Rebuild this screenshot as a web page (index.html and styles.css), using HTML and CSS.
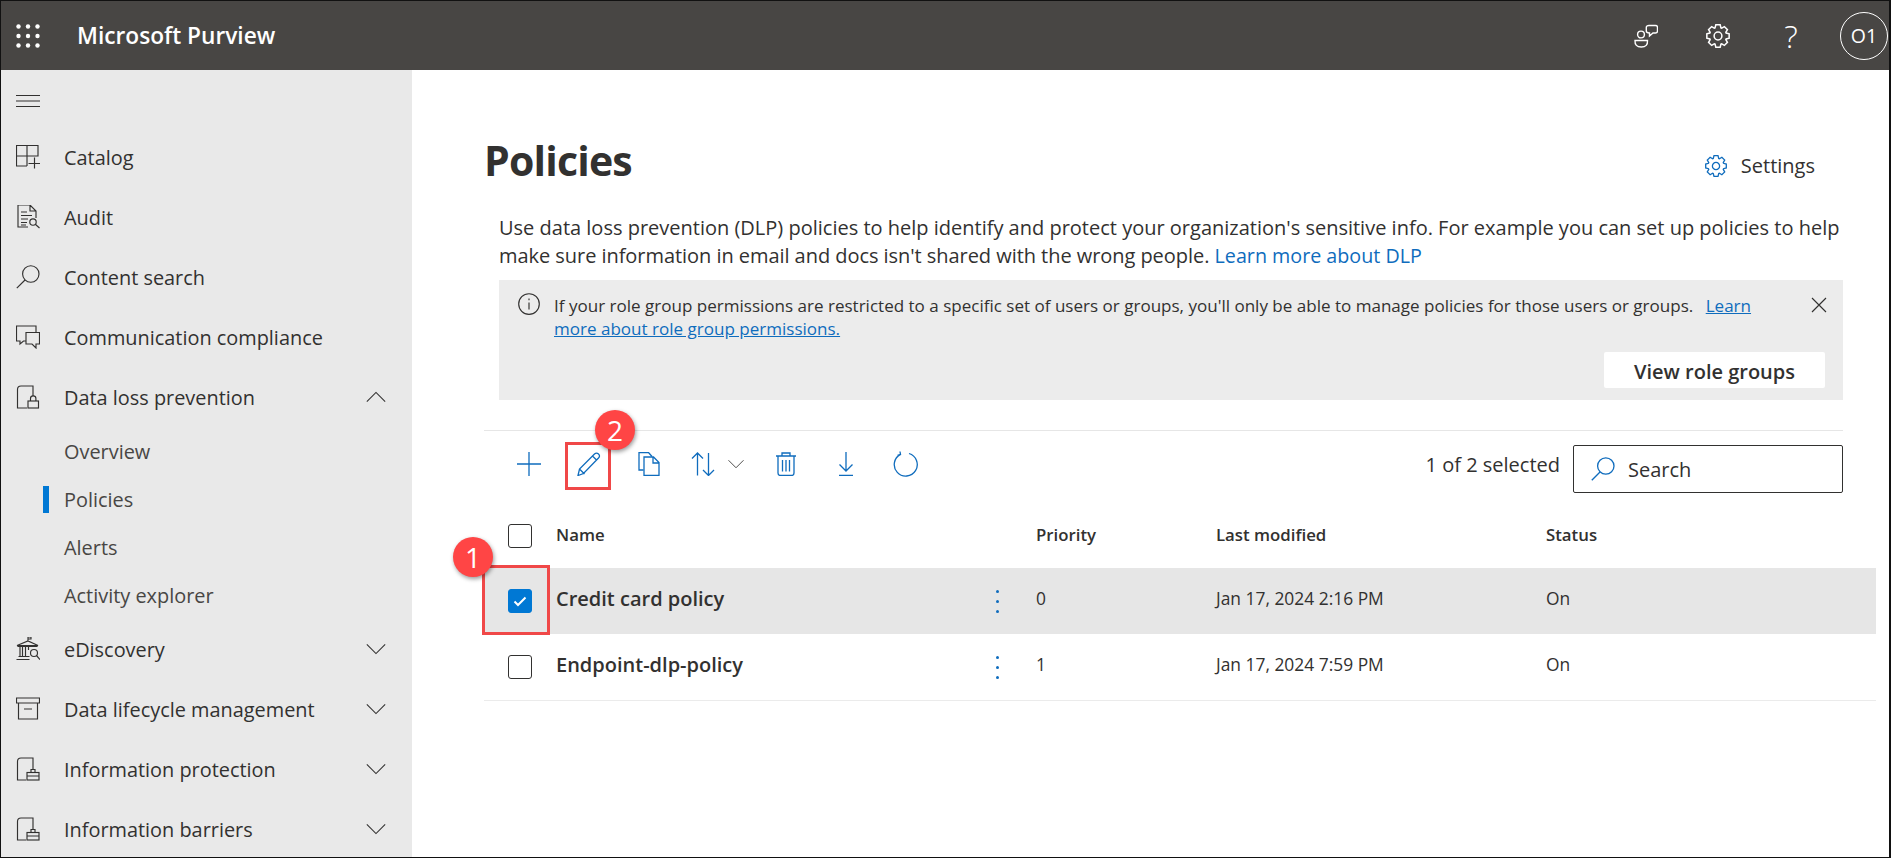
FILE: index.html
```html
<!DOCTYPE html>
<html lang="en">
<head>
<meta charset="utf-8">
<title>Microsoft Purview - Policies</title>
<link rel="stylesheet" href="styles.css">
</head>
<body>
<svg class="defs" width="0" height="0" aria-hidden="true">
  <defs>
    <symbol id="gear" viewBox="0 0 24 24">
      <g transform="translate(12 12)">
        <polygon points="-2.74,-7.52 -2,-10.3 2,-10.3 2.74,-7.52 3.38,-7.25 5.87,-8.7 8.7,-5.87 7.25,-3.38 7.52,-2.74 10.3,-2 10.3,2 7.52,2.74 7.25,3.38 8.7,5.87 5.87,8.7 3.38,7.25 2.74,7.52 2,10.3 -2,10.3 -2.74,7.52 -3.38,7.25 -5.87,8.7 -8.7,5.87 -7.25,3.38 -7.52,2.74 -10.3,2 -10.3,-2 -7.52,-2.74 -7.25,-3.38 -8.7,-5.87 -5.87,-8.7 -3.38,-7.25"/>
        <circle r="3.6"/>
      </g>
    </symbol>
    <symbol id="down" viewBox="0 0 24 24"><path d="M2 7l10 10L22 7"/></symbol>
    <symbol id="magnifier" viewBox="0 0 24 24"><circle cx="14.8" cy="9" r="8.2"/><path d="M9 15L.8 23.2"/></symbol>
    <symbol id="doclock" viewBox="0 0 24 24"><path d="M11 23H1.5V4.500Q1.500 1 5 1h12v10"/><rect x="12" y="16" width="10.500" height="7"/><path d="M14.500 16v-2.500a2.700 2.700 0 0 1 5.400 0V16"/></symbol>
    <symbol id="docbag" viewBox="0 0 24 24"><path d="M10 23H1.500V4.500Q1.500 1 5 1h12v11"/><rect x="11" y="15.500" width="12" height="7.500"/><path d="M15 15.500v-3h4v3M11 19h12"/></symbol>
  </defs>
</svg>

<div class="app">
  <header class="topbar">
    <svg class="waffle" width="24" height="24" viewBox="0 0 24 24"><g class="dots-white"><circle cx="2.500" cy="2.500" r="2.200"/><circle cx="12" cy="2.500" r="2.200"/><circle cx="21.500" cy="2.500" r="2.200"/><circle cx="2.500" cy="12" r="2.200"/><circle cx="12" cy="12" r="2.200"/><circle cx="21.500" cy="12" r="2.200"/><circle cx="2.500" cy="21.500" r="2.200"/><circle cx="12" cy="21.500" r="2.200"/><circle cx="21.500" cy="21.500" r="2.200"/></g></svg>
    <div class="brand">Microsoft Purview</div>
    <div class="top-actions">
      <svg class="top-icon line-white" width="24" height="24" viewBox="0 0 24 24"><circle cx="7" cy="10.500" r="3.400"/><path d="M1 16.500h12.500q.5 6.500-6.200 6.500T1 16.500z"/><path d="M15 1.500h6.500q2 0 2 2v3.500q0 2-2 2h-2.500l-3.500 3V9q-3.200 0-3.200-2V3.500q0-2 2.700-2z"/></svg>
      <svg class="top-icon line-white" width="26" height="26"><use href="#gear"/></svg>
      <div class="help">?</div>
      <div class="avatar">O1</div>
    </div>
  </header>

  <div class="body-row">
    <nav class="sidebar">
      <div class="nav-toggle">
        <svg class="line-dark" width="24" height="24" viewBox="0 0 24 24"><path d="M0 6.500h24M0 12h24M0 17.500h24"/></svg>
      </div>
      <div class="nav-item">
        <svg class="line-dark" width="24" height="24" viewBox="0 0 24 24"><path d="M.5.500H22V11H.5zM11 .5V21M.5 11V21H11M12.500 18.500H24M18.500 12.500V23.500"/></svg>
        <span>Catalog</span>
      </div>
      <div class="nav-item">
        <svg class="line-dark" width="24" height="24" viewBox="0 0 24 24"><path d="M12 22H2V0h12l6 6v7M14 0v6h6M5 7h6M5 10.500h11M5 14h7M5 17.500h6M5 20h5"/><circle cx="17" cy="17" r="3.200"/><path d="M19.300 19.300L23.500 23"/></svg>
        <span>Audit</span>
      </div>
      <div class="nav-item">
        <svg class="line-dark" width="24" height="24"><use href="#magnifier"/></svg>
        <span>Content search</span>
      </div>
      <div class="nav-item">
        <svg class="line-dark" width="24" height="24" viewBox="0 0 24 24"><path d="M20 7V1H.5v15H4v3l3.500-3H10"/><path d="M10 7.500h13.500V19H20v4l-4-4h-6z"/></svg>
        <span>Communication compliance</span>
      </div>
      <div class="nav-item">
        <svg class="line-dark" width="24" height="24"><use href="#doclock"/></svg>
        <span>Data loss prevention</span>
        <svg class="chev line-dark" width="22" height="22" viewBox="0 0 24 24"><path d="M2 17L12 7l10 10"/></svg>
      </div>
      <div class="nav-sub">Overview</div>
      <div class="nav-sub current">Policies</div>
      <div class="nav-sub">Alerts</div>
      <div class="nav-sub">Activity explorer</div>
      <div class="nav-item">
        <svg class="line-dark" width="24" height="24" viewBox="0 0 24 24"><path d="M12 4V0h3v2h-3M1 8.500L12 4l10 4.500zM2 8.500v1h19v-1M4 10v9M6.500 10v9M9.500 10v9M12.500 10v3M2.500 19.500h11M.5 22.500h13"/><circle cx="18" cy="16" r="3.500"/><path d="M20.500 18.500L24 22.500"/></svg>
        <span>eDiscovery</span>
        <svg class="chev line-dark" width="22" height="22"><use href="#down"/></svg>
      </div>
      <div class="nav-item">
        <svg class="line-dark" width="24" height="24" viewBox="0 0 24 24"><path d="M.5 1h23v5H.5zM2.500 6v16h19V6M8 12h8"/></svg>
        <span>Data lifecycle management</span>
        <svg class="chev line-dark" width="22" height="22"><use href="#down"/></svg>
      </div>
      <div class="nav-item">
        <svg class="line-dark" width="24" height="24"><use href="#docbag"/></svg>
        <span>Information protection</span>
        <svg class="chev line-dark" width="22" height="22"><use href="#down"/></svg>
      </div>
      <div class="nav-item">
        <svg class="line-dark" width="24" height="24"><use href="#docbag"/></svg>
        <span>Information barriers</span>
        <svg class="chev line-dark" width="22" height="22"><use href="#down"/></svg>
      </div>
    </nav>

    <main class="content">
      <div class="title-row">
        <h1>Policies</h1>
        <div class="settings">
          <svg class="line-blue" width="24" height="24"><use href="#gear"/></svg>
          <span>Settings</span>
        </div>
      </div>
      <p class="desc">Use data loss prevention (DLP) policies to help identify and protect your organization's sensitive info. For example you can set up policies to help<br><span class="desc-line">make sure information in email and docs isn't shared with the wrong people.</span> <a href="#">Learn more about DLP</a></p>

      <section class="banner">
        <svg class="line-dark info" width="22" height="22" viewBox="0 0 22 22"><circle cx="11" cy="11" r="10.300"/><path d="M11 9.500v7M11 5.500v1.800"/></svg>
        <p>If your role group permissions are restricted to a specific set of users or groups, you'll only be able to manage policies for those users or groups. <a class="learn" href="#">Learn</a><br><a href="#">more about role group permissions.</a></p>
        <svg class="line-dark close" width="16" height="16" viewBox="0 0 16 16"><path d="M1 1l14 14M15 1L1 15"/></svg>
        <button class="view-btn" type="button">View role groups</button>
      </section>

      <div class="toolbar">
        <div class="tool"><svg class="line-blue" width="24" height="24" viewBox="0 0 24 24"><path d="M12 0v24M0 12h24"/></svg></div>
        <div class="tool"><svg class="line-blue" width="24" height="24" viewBox="0 0 24 24"><path d="M1 23.500l1.500-6.500L17.500 2q2-1.800 4 0t0 4L6.500 21.500zM2.500 17l5 5M15.500 4l4.500 4.500"/></svg></div>
        <div class="tool"><svg class="line-blue" width="24" height="24" viewBox="0 0 24 24"><path d="M6.500 18H2V.5h9.500l3.500 4"/><path d="M7 5h9.500l5.500 5.500V23.500H7zM16 5v6h6"/></svg></div>
        <div class="tool tool-sort">
          <svg class="line-blue" width="24" height="24" viewBox="0 0 24 24"><path d="M6.500 23.500V1M1 6.500L6.500 1 12 6.500M17.500 1v22.500M12 18l5.500 5.500L23 18"/></svg>
          <svg class="line-dark" width="18" height="18"><use href="#down"/></svg>
        </div>
        <div class="tool"><svg class="line-blue" width="24" height="24" viewBox="0 0 24 24"><path d="M2 4h20M8 4V1h8v3M4 4v17q0 2.500 2.500 2.500h11q2.500 0 2.500-2.500V4M8.500 8v11.500M12 8v11.500M15.500 8v11.500"/></svg></div>
        <div class="tool"><svg class="line-blue" width="24" height="24" viewBox="0 0 24 24"><path d="M12 0v19M5.500 12.500L12 19l6.500-6.500M5 23.500h14"/></svg></div>
        <div class="tool"><svg class="line-blue" width="26" height="26" viewBox="0 0 26 26"><path d="M16 2.500a11.500 11.500 0 1 1-8.500.8M7 .5l.5 3-3 .8"/></svg></div>
        <span class="selected-count">1 of 2 selected</span>
        <div class="search">
          <svg class="line-blue" width="24" height="24"><use href="#magnifier"/></svg>
          <span>Search</span>
        </div>
      </div>

      <div class="table">
        <div class="row head">
          <span class="check"></span><span class="hcell">Name</span><span></span><span class="hcell">Priority</span><span class="hcell">Last modified</span><span class="hcell">Status</span>
        </div>
        <div class="row item selected">
          <span class="check on"><svg width="14" height="14" viewBox="0 0 14 14"><path d="M1.500 7.500l3.500 3.500L12.500 3.500"/></svg></span>
          <span class="name cell">Credit card policy</span>
          <span class="more"><i></i><i></i><i></i></span>
          <span class="cell">0</span><span class="cell">Jan 17, 2024 2:16 PM</span><span class="cell">On</span>
        </div>
        <div class="row item">
          <span class="check"></span>
          <span class="name cell">Endpoint-dlp-policy</span>
          <span class="more"><i></i><i></i><i></i></span>
          <span class="cell">1</span><span class="cell">Jan 17, 2024 7:59 PM</span><span class="cell">On</span>
        </div>
      </div>
    </main>
  </div>

  <div class="mark box-edit"></div>
  <div class="mark box-check"></div>
  <div class="badge badge-1">1</div>
  <div class="badge badge-2">2</div>
</div>
</body>
</html>
```

FILE: styles.css
```css
* { box-sizing: border-box; }
html, body { margin: 0; padding: 0; }
body { font-family: "Open Sans", "Noto Sans", "Liberation Sans", sans-serif; color: #323130; background: #fff; }
.defs { position: absolute; }
a { color: #0f6cbd; text-decoration: none; }

.line-dark, .line-blue, .line-white { fill: none; stroke-width: 1.15; }
.line-dark { stroke: #323130; }
.line-blue { stroke: #0f6cbd; stroke-width: 1.3; }
.line-white { stroke: #fff; stroke-width: 1.4; }
.dots-white { fill: #fff; }

.app { position: relative; width: 1891px; height: 858px; border: 1px solid #111; border-right-width: 2px; overflow: hidden; display: flex; flex-direction: column; }

.topbar { height: 69px; flex: none; background: #484644; color: #fff; display: flex; align-items: center; padding-left: 15px; }
.waffle { flex: none; }
.brand { margin-left: 37px; font-size: 22.700px; font-weight: 600; }
.top-actions { margin-left: auto; display: flex; align-items: center; }
.top-icon { margin-right: 47px; }
.help { width: 26px; margin-right: 36px; text-align: center; font-size: 32px; font-weight: 300; line-height: 1; }
.avatar { width: 48px; height: 48px; margin-right: 1px; border: 1px solid #fff; border-radius: 50%; display: flex; align-items: center; justify-content: center; font-size: 19.500px; }

.body-row { flex: 1; display: flex; min-height: 0; }

.sidebar { width: 411px; flex: none; background: #e9e9e9; }
.nav-toggle { height: 57px; padding: 4px 0 0 15px; display: flex; align-items: center; }
.nav-item { height: 60px; padding: 0 25px 0 15px; display: flex; align-items: center; gap: 24px; font-size: 19.900px; }
.nav-item .chev { margin-left: auto; }
.nav-sub { position: relative; height: 48px; padding-left: 63px; display: flex; align-items: center; font-size: 19.900px; color: #484644; }
.nav-sub.current::before { content: ""; position: absolute; left: 42px; top: 11px; width: 6px; height: 27px; background: #0078d4; }

.content { flex: 1; min-width: 0; padding: 0 46px 0 72px; }
.title-row { height: 144px; display: flex; align-items: flex-start; justify-content: space-between; padding: 60px 0 0 0; }
h1 { margin: 0; font-size: 41px; line-height: 60px; font-weight: 700; letter-spacing: -0.800px; }
.settings { display: flex; align-items: center; gap: 13px; margin: 24px 28px 0 0; font-size: 20px; line-height: 24px; }

.desc { margin: 0 0 10px 15px; font-size: 20px; line-height: 28px; }
.desc-line { letter-spacing: -0.050px; }
.desc a { font-size: 19.700px; }

.banner { position: relative; height: 120px; margin-left: 15px; padding: 14px 60px 0 55px; background: #ececec; font-size: 17.050px; line-height: 23px; }
.banner p { margin: 0; }
.banner a { text-decoration: underline; }
.banner .learn { margin-left: 8px; }
.info { position: absolute; left: 19px; top: 13px; }
.close { position: absolute; right: 16px; top: 17px; }
.view-btn { position: absolute; right: 18px; bottom: 12px; width: 221px; height: 36px; border: 0; border-radius: 2px; padding: 2px 0 0; background: #fff; color: #323130; font: 600 20px "Open Sans", sans-serif; }

.toolbar { height: 73px; margin-top: 30px; border-top: 1px solid #e6e6e6; padding: 9px 0 0 15px; display: flex; align-items: flex-start; }
.tool { width: 60px; height: 48px; display: flex; align-items: center; justify-content: center; }
.tool-sort { width: 77px; justify-content: flex-start; gap: 12px; padding-left: 12px; }
.selected-count { margin: 12px 13px 0 auto; font-size: 20px; line-height: 26px; }
.search { width: 270px; height: 48px; margin-top: 5px; border: 1px solid #323130; border-radius: 2px; padding-left: 17px; display: flex; align-items: center; gap: 13px; font-size: 20px; }

.table { margin-right: -33px; }
.row { display: grid; grid-template-columns: 72px 429px 51px 180px 330px 1fr; align-items: center; }
.head { height: 65px; font-size: 16.800px; font-weight: 600; }
.hcell { padding-bottom: 2px; }
.item { height: 66px; font-size: 17.400px; }
.item:last-child { border-bottom: 1px solid #ebebeb; height: 67px; }
.selected { background: #e6e6e6; }
.cell { padding-bottom: 7px; }
.name { font-size: 20px; font-weight: 600; padding-bottom: 5px; }
.check { justify-self: center; width: 24px; height: 24px; border: 1px solid #323130; border-radius: 3px; background: #fff; display: flex; align-items: center; justify-content: center; }
.check.on { background: #0078d4; border-color: #0078d4; }
.check svg { fill: none; stroke: #fff; stroke-width: 2; }
.more { width: 24px; display: flex; flex-direction: column; align-items: center; gap: 7px; }
.more i { width: 3px; height: 3px; border-radius: 50%; background: #0f6cbd; }

.mark { position: absolute; border: 3px solid #f04848; }
.box-edit { left: 564px; top: 441px; width: 46px; height: 48px; }
.box-check { left: 481px; top: 564px; width: 68px; height: 70px; }
.badge { position: absolute; width: 40px; height: 40px; border-radius: 50%; background: #ff4545; color: #fff; display: flex; align-items: center; justify-content: center; font-size: 28px; box-shadow: 1px 2px 4px rgba(0,0,0,.4); }
.badge-1 { left: 452px; top: 536px; }
.badge-2 { left: 594px; top: 409px; }
```
